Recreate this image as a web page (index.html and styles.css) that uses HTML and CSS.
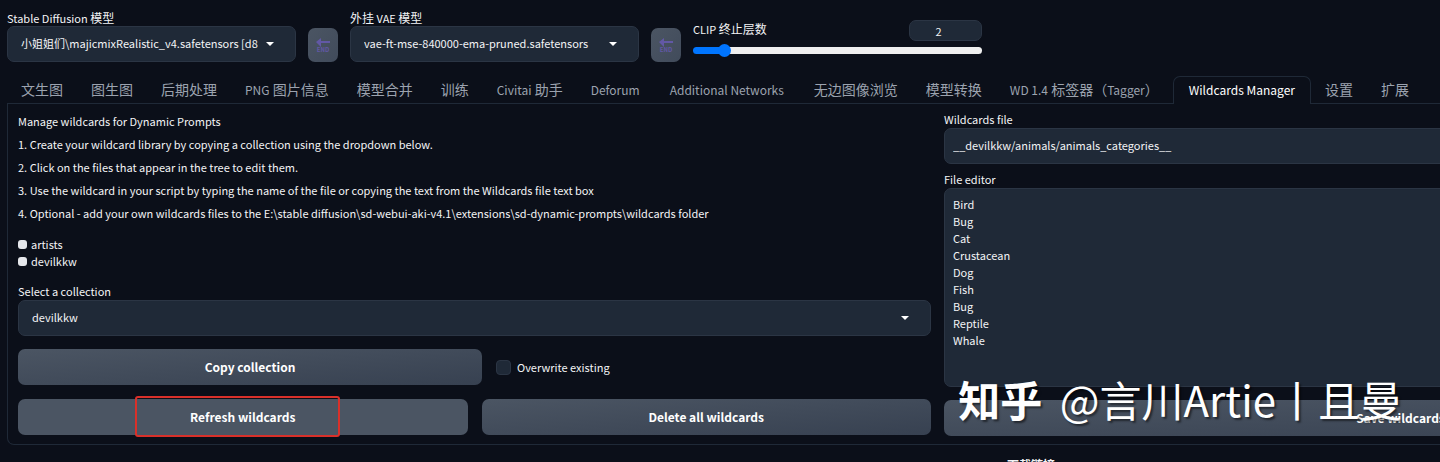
FILE: index.html
```html
<!DOCTYPE html>
<html lang="zh-CN">
  <head>
    <title>Stable Diffusion</title>
    <meta charset="utf-8">
    <meta name="viewport" content="width=device-width, initial-scale=1">
    <link rel="stylesheet" href="styles.css">
  </head>
  <body>
    <div class="page">
      <header class="quicksettings">
        <div class="field model">
          <label for="checkpoint">Stable Diffusion <span class="cjk">模型</span></label>
          <div class="dropdown">
            <select id="checkpoint">
              <option>小姐姐们\majicmixRealistic_v4.safetensors [d8</option>
            </select>
          </div>
        </div>
        <button class="tool" type="button" aria-label="Refresh checkpoints">
          <svg width="16" height="18" viewBox="0 0 16 18">
            <path d="M1 6l5-4v3h9v2H6v4z"/>
            <text x="8" y="16" text-anchor="middle">END</text>
          </svg>
        </button>
        <div class="field model">
          <label for="vae"><span class="cjk">外挂</span> VAE <span class="cjk">模型</span></label>
          <div class="dropdown">
            <select id="vae">
              <option>vae-ft-mse-840000-ema-pruned.safetensors</option>
            </select>
          </div>
        </div>
        <button class="tool" type="button" aria-label="Refresh VAE">
          <svg width="16" height="18" viewBox="0 0 16 18">
            <path d="M1 6l5-4v3h9v2H6v4z"/>
            <text x="8" y="16" text-anchor="middle">END</text>
          </svg>
        </button>
        <div class="clip">
          <div class="clip-head">
            <label for="clip">CLIP <span class="cjk">终止层数</span></label>
            <input class="clip-number" type="text" value="2" aria-label="CLIP value">
          </div>
          <input id="clip" class="slider" type="range" min="1" max="12" value="2">
        </div>
      </header>

      <nav class="tabs">
        <button type="button">文生图</button>
        <button type="button">图生图</button>
        <button type="button">后期处理</button>
        <button type="button"><span class="latin">PNG</span> 图片信息</button>
        <button type="button">模型合并</button>
        <button type="button">训练</button>
        <button type="button"><span class="latin">Civitai</span> 助手</button>
        <button type="button"><span class="latin">Deforum</span></button>
        <button type="button" class="wide"><span class="latin">Additional Networks</span></button>
        <button type="button">无边图像浏览</button>
        <button type="button">模型转换</button>
        <button type="button"><span class="latin">WD 1.4</span> 标签器（<span class="latin">Tagger</span>）</button>
        <button type="button" class="wide selected"><span class="latin">Wildcards Manager</span></button>
        <button type="button">设置</button>
        <button type="button">扩展</button>
      </nav>

      <main class="panel">
        <section class="column">
          <div class="help">
            <p>Manage wildcards for Dynamic Prompts</p>
            <p>1. Create your wildcard library by copying a collection using the dropdown below.</p>
            <p>2. Click on the files that appear in the tree to edit them.</p>
            <p>3. Use the wildcard in your script by typing the name of the file or copying the text from the Wildcards file text box</p>
            <p>4. Optional - add your own wildcards files to the E:\stable diffusion\sd-webui-aki-v4.1\extensions\sd-dynamic-prompts\wildcards folder</p>
          </div>
          <div class="tree">
            <label><input type="checkbox">artists</label>
            <label><input type="checkbox">devilkkw</label>
          </div>
          <div class="field collection">
            <label for="collection">Select a collection</label>
            <div class="dropdown">
              <select id="collection">
                <option>devilkkw</option>
              </select>
            </div>
          </div>
          <div class="row copy-row">
            <button class="btn" type="button">Copy collection</button>
            <label class="overwrite"><input type="checkbox">Overwrite existing</label>
          </div>
          <div class="row">
            <button class="btn hover" type="button"><span class="marked">Refresh wildcards</span></button>
            <button class="btn" type="button">Delete all wildcards</button>
          </div>
        </section>

        <section class="column editor">
          <div class="field">
            <label for="file">Wildcards file</label>
            <input id="file" type="text" value="__devilkkw/animals/animals_categories__">
          </div>
          <div class="field">
            <label for="content">File editor</label>
            <textarea id="content">Bird
Bug
Cat
Crustacean
Dog
Fish
Bug
Reptile
Whale</textarea>
          </div>
          <button class="btn" type="button">Save wildcards</button>
        </section>
      </main>

      <footer>下载链接</footer>
    </div>
    <div class="watermark"><b>知乎</b> @言川Artie丨且曼</div>
  </body>
</html>
```
FILE: styles.css
```css
*, *::after {
  box-sizing: border-box;
}

body {
  margin: 0;
  height: 100vh;
  overflow: hidden;
  position: relative;
  background: #0b0f19;
  color: #f3f4f6;
  font-family: "Noto Sans CJK SC", sans-serif;
  font-size: 11px;
  line-height: 17px;
}

button, input, select, textarea {
  font: inherit;
  color: inherit;
  margin: 0;
}

/* latin letters run large in this family, so they get their own size */
.cjk {
  font-size: 12px;
}

.latin {
  font-size: 12px;
}

/* the two column layout is wider than the window */
.page {
  width: 130%;
  padding: 9px 4px 0 7px;
}

.quicksettings {
  display: flex;
  align-items: flex-end;
  gap: 12px;
}

.field {
  display: flex;
  flex-direction: column;
}

.field label {
  height: 17px;
}

.model {
  width: 289px;
}

.dropdown {
  position: relative;
}

.dropdown::after {
  content: "";
  position: absolute;
  right: 22px;
  top: 16px;
  border: 4px solid transparent;
  border-top-color: #fff;
  border-bottom: 0;
}

select, .field input, textarea {
  display: block;
  width: 100%;
  height: 36px;
  background: #1f2937;
  border: 1px solid #2b3544;
  border-radius: 7px;
}

select {
  appearance: none;
  padding: 0 36px 2px 13px;
}

.tool {
  display: flex;
  align-items: center;
  justify-content: center;
  width: 30px;
  height: 34px;
  padding: 0;
  border: 0;
  border-radius: 7px;
  background: linear-gradient(to bottom right, #4b5563, #414b5b);
}

.tool svg {
  fill: #6258a6;
}

.tool text {
  font-size: 6px;
  font-weight: bold;
}

.clip {
  width: 289px;
  padding-bottom: 8px;
}

.clip-head {
  display: flex;
  justify-content: space-between;
  margin-bottom: 6px;
}

.clip-number {
  width: 73px;
  height: 21px;
  padding: 0 14px 0 0;
  text-align: center;
  background: #1f2937;
  border: 1px solid #2b3544;
  border-radius: 7px;
}

.slider {
  appearance: none;
  display: block;
  width: 100%;
  height: 7px;
  border-radius: 4px;
  background: linear-gradient(to right, #0075ff 11%, #efefef 11%);
}

.slider::-webkit-slider-thumb {
  appearance: none;
  width: 13px;
  height: 13px;
  border-radius: 50%;
  background: #0075ff;
}

.tabs {
  display: flex;
  margin-top: 14px;
  border-bottom: 1px solid #1f2937;
}

.tabs button {
  height: 28px;
  margin-bottom: -1px;
  padding: 0 13px 2px;
  border: 1px solid transparent;
  border-bottom: 0;
  border-radius: 7px 7px 0 0;
  background: none;
  color: #9ca3af;
  font-size: 14px;
  white-space: nowrap;
}

.tabs .wide {
  padding: 0 15px 2px;
}

.tabs .selected {
  border-color: #1f2937;
  background: #0b0f19;
  color: #fff;
}

.panel {
  display: grid;
  grid-template-columns: 1fr 1fr;
  gap: 13px;
  padding: 7px 10px 8px;
  border: 1px solid #1f2937;
  border-top: 0;
  border-radius: 0 0 7px 7px;
}

.help p {
  margin: 0 0 6px;
}

.help {
  padding-top: 2px;
}

.tree {
  margin-top: 14px;
}

.tree label {
  display: flex;
  align-items: center;
  gap: 4px;
}

.tree input {
  appearance: none;
  width: 9px;
  height: 9px;
  border-radius: 3px;
  background: #e5e7eb;
}

.collection {
  margin: 13px 0;
}

.row {
  display: grid;
  grid-template-columns: 1fr 1fr;
  gap: 14px;
}

.copy-row {
  grid-template-columns: 464px 1fr;
  margin-bottom: 14px;
}

.overwrite {
  display: flex;
  align-items: center;
  gap: 6px;
}

.overwrite input {
  appearance: none;
  width: 15px;
  height: 15px;
  border: 1px solid #2b3544;
  border-radius: 4px;
  background: #1f2937;
}

.btn {
  position: relative;
  width: 100%;
  height: 36px;
  padding: 0 0 2px;
  border: 0;
  border-radius: 7px;
  background: linear-gradient(to bottom right, #4b5563, #374151);
  color: #fff;
  font-size: 12px;
  font-weight: bold;
}

.hover {
  background: #4b5563;
}

.marked::after {
  content: "";
  position: absolute;
  top: -3px;
  bottom: -2px;
  left: 26%;
  width: 205px;
  border: 2px solid #d9302a;
  border-radius: 3px;
}

.editor .field {
  margin-bottom: 7px;
}

.editor input {
  padding: 0 8px 2px;
}

.editor textarea {
  height: 199px;
  padding: 7px 8px;
  resize: none;
}

.editor .btn {
  margin-top: 6px;
}

footer {
  margin: 11px 0 0 1000px;
  font-size: 12px;
  font-weight: bold;
}

.watermark {
  position: absolute;
  right: 38px;
  bottom: 34px;
  color: #fff;
  font-size: 42px;
  line-height: 58px;
  white-space: nowrap;
  text-shadow: 2px 2px 2px rgba(0, 0, 0, 0.5);
  pointer-events: none;
}

.watermark b {
  margin-right: 8px;
}
```
